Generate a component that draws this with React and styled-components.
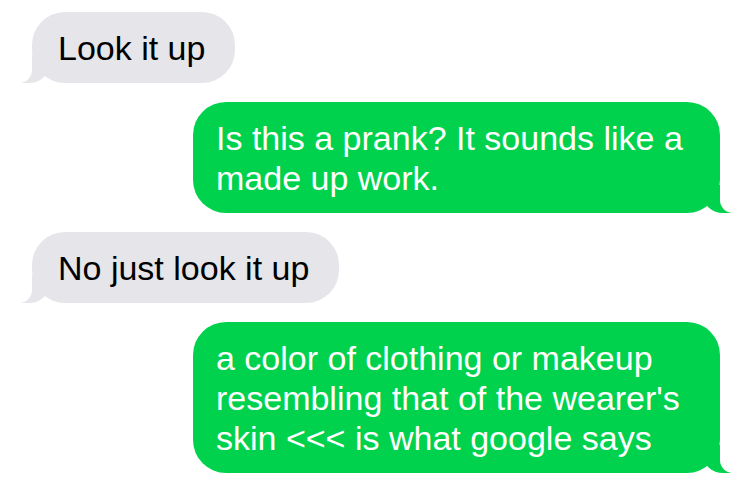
import React from 'react';
import styled, { createGlobalStyle } from 'styled-components';

const GlobalStyle = createGlobalStyle`
  html, body {
    margin: 0;
    padding: 0;
    background: #ffffff;
  }
  body {
    font-family: "Liberation Sans", Arial, sans-serif;
  }
`;

const GRAY = '#e5e5ea';
const GREEN = '#00d24d';

const Thread = styled.div`
  display: flex;
  flex-direction: column;
  gap: 19px;
  width: 750px;
  box-sizing: border-box;
  padding: 12px 30px 0 32px;
`;

const Row = styled.div`
  display: flex;
  justify-content: ${(p) => (p.$mine ? 'flex-end' : 'flex-start')};
`;

const Bubble = styled.div`
  position: relative;
  max-width: 527px;
  box-sizing: border-box;
  padding: ${(p) => (p.$mine ? '16px 34px 15px 23px' : '16px 30px 15px 26px')};
  border-radius: 33px;
  background: ${(p) => (p.$mine ? GREEN : GRAY)};
  color: ${(p) => (p.$mine ? '#ffffff' : '#000000')};
  font-size: 34px;
  line-height: 40px;

  /* the little tail in the bottom corner */
  &::before {
    content: '';
    position: absolute;
    bottom: 0;
    ${(p) => (p.$mine ? 'right: -11px;' : 'left: -11px;')}
    width: 28px;
    height: 28px;
    background: ${(p) => (p.$mine ? GREEN : GRAY)};
    ${(p) =>
      p.$mine
        ? 'border-bottom-left-radius: 20px 18px;'
        : 'border-bottom-right-radius: 20px 18px;'}
  }
  &::after {
    content: '';
    position: absolute;
    bottom: 0;
    ${(p) => (p.$mine ? 'right: -30px;' : 'left: -30px;')}
    width: 30px;
    height: 30px;
    background: #ffffff;
    ${(p) =>
      p.$mine
        ? 'border-bottom-left-radius: 13px;'
        : 'border-bottom-right-radius: 13px;'}
  }
`;

const messages = [
  { mine: false, text: 'Look it up' },
  { mine: true, text: 'Is this a prank? It sounds like a made up work.' },
  { mine: false, text: 'No just look it up' },
  {
    mine: true,
    text: "a color of clothing or makeup resembling that of the wearer's skin <<< is what google says",
  },
];

const App = () => {
  return (
    <>
      <GlobalStyle />
      <Thread>
        {messages.map((m, i) => (
          <Row key={i} $mine={m.mine}>
            <Bubble $mine={m.mine}>{m.text}</Bubble>
          </Row>
        ))}
      </Thread>
    </>
  );
};

export default App;
